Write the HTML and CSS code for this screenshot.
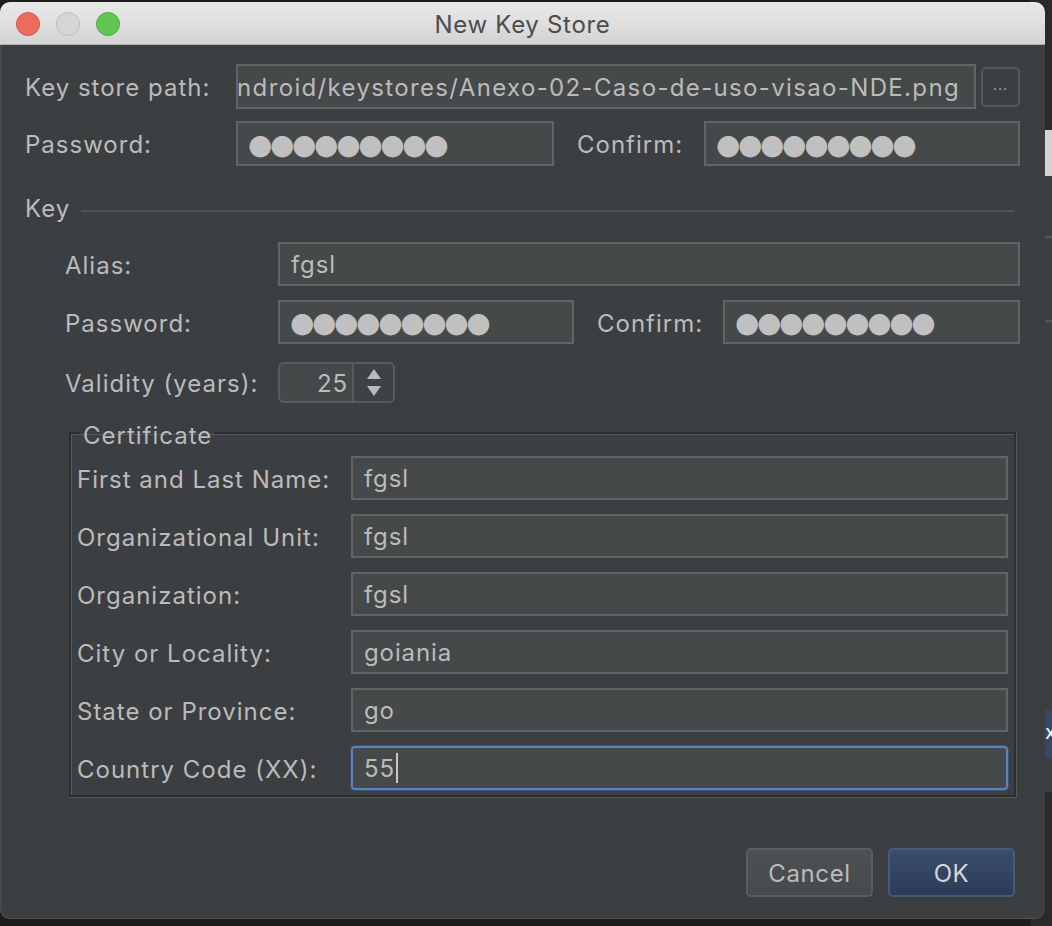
FILE: index.html
```html
<!DOCTYPE html>
<html>
<head>
<meta charset="utf-8">
<title>New Key Store</title>
<link rel="stylesheet" href="styles.css">
</head>
<body>
<div class="desktop">
  <div class="bgwin">
    <div class="bg-light"></div>
    <div class="bg-line l1"></div>
    <div class="bg-line l2"></div>
    <div class="bg-line l3"></div>
    <div class="bg-tab">x</div>
    <div class="bg-dark"></div>
  </div>
  <div class="dialog">
    <div class="titlebar">
      <div class="lights">
        <span class="light red"></span>
        <span class="light grey"></span>
        <span class="light green"></span>
      </div>
      <div class="title">New Key Store</div>
    </div>
    <div class="content">
      <div class="row r-path">
        <span class="lbl lbl-top">Key store path:</span>
        <div class="field path"><span class="path-text">/Users/fgsl/android/keystores/Anexo-02-Caso-de-uso-visao-NDE.png</span></div>
        <button class="browse">...</button>
      </div>
      <div class="row r-pass">
        <span class="lbl lbl-top">Password:</span>
        <div class="field w-pass1"><span class="dots">●●●●●●●●●</span></div>
        <span class="lbl lbl-confirm1">Confirm:</span>
        <div class="field grow"><span class="dots">●●●●●●●●●</span></div>
      </div>

      <div class="section-head">
        <span class="section-title">Key</span>
        <span class="section-line"></span>
      </div>

      <div class="key">
        <div class="row r-alias">
          <span class="lbl lbl-key">Alias:</span>
          <div class="field grow"><span class="val">fgsl</span></div>
        </div>
        <div class="row r-kpass">
          <span class="lbl lbl-key">Password:</span>
          <div class="field w-pass2"><span class="dots">●●●●●●●●●</span></div>
          <span class="lbl lbl-confirm2">Confirm:</span>
          <div class="field grow"><span class="dots">●●●●●●●●●</span></div>
        </div>
        <div class="row r-valid">
          <span class="lbl lbl-key">Validity (years):</span>
          <div class="spinner">
            <span class="spin-val">25</span>
            <span class="spin-arrows">
              <svg width="16" height="30" viewBox="0 0 16 30"><path d="M8 1 L15 11 L1 11 Z" fill="#bbbbbb"/><path d="M1 18 L15 18 L8 28 Z" fill="#bbbbbb"/></svg>
            </span>
          </div>
        </div>

        <fieldset class="cert">
          <legend>Certificate</legend>
          <div class="cert-row">
            <span class="lbl lbl-cert">First and Last Name:</span>
            <div class="field grow"><span class="val">fgsl</span></div>
          </div>
          <div class="cert-row">
            <span class="lbl lbl-cert">Organizational Unit:</span>
            <div class="field grow"><span class="val">fgsl</span></div>
          </div>
          <div class="cert-row">
            <span class="lbl lbl-cert">Organization:</span>
            <div class="field grow"><span class="val">fgsl</span></div>
          </div>
          <div class="cert-row">
            <span class="lbl lbl-cert">City or Locality:</span>
            <div class="field grow"><span class="val">goiania</span></div>
          </div>
          <div class="cert-row">
            <span class="lbl lbl-cert">State or Province:</span>
            <div class="field grow"><span class="val">go</span></div>
          </div>
          <div class="cert-row">
            <span class="lbl lbl-cert">Country Code (XX):</span>
            <div class="field grow focused"><span class="val">55</span><span class="caret"></span></div>
          </div>
        </fieldset>
      </div>

      <div class="buttons">
        <button class="btn cancel">Cancel</button>
        <button class="btn ok">OK</button>
      </div>
    </div>
  </div>
</div>
</body>
</html>
```

FILE: styles.css
```css
* { box-sizing: border-box; }
html, body { margin: 0; padding: 0; }
body {
  background: #1d1d1d;
  font-family: Inter, "Noto Sans", "Liberation Sans", sans-serif;
  width: 1052px;
  height: 926px;
  overflow: hidden;
}
.desktop {
  position: relative;
  width: 1052px;
  height: 926px;
  padding-top: 2px;
}
.bgwin {
  position: absolute;
  left: 1030px;
  top: 0;
  width: 22px;
  height: 926px;
  background: #2a2a2a;
  overflow: hidden;
}
.bg-light { position: absolute; left: 0; top: 130px; width: 40px; height: 46px; background: #d4d4d4; }
.bg-line { position: absolute; left: 0; width: 40px; height: 2px; background: #555; }
.bg-line.l1 { top: 176px; height: 60px; background: #3c3f41; }
.bg-line.l2 { top: 236px; height: 474px; background: #3c3f41; border-top: 2px solid #555; }
.bg-line.l3 { top: 320px; background: #555; }
.bg-tab { position: absolute; left: 0; top: 710px; width: 40px; height: 48px; background: #34486a; color: #fff; font-size: 20px; line-height: 44px; padding-left: 15px; }
.bg-dark { position: absolute; left: 0; top: 758px; width: 40px; height: 34px; background: #3c3f41; }

.dialog {
  position: relative;
  width: 1045px;
  height: 917px;
  background: #3c3f41;
  border-radius: 10px;
  overflow: hidden;
  display: flex;
  flex-direction: column;
  box-shadow: inset 0 -1px 0 #4e5052, inset 1px 0 0 #4a4c4e;
}
.titlebar {
  position: relative;
  height: 43px;
  flex: none;
  background: linear-gradient(#e9e9e9, #d3d3d3);
  border-bottom: 1px solid #b1b1b1;
  display: flex;
  align-items: center;
  justify-content: center;
  padding-top: 3px;
}
.lights {
  position: absolute;
  left: 16px;
  top: 10px;
  display: flex;
  gap: 16px;
}
.light {
  width: 24px;
  height: 24px;
  border-radius: 50%;
  display: block;
}
.light.red { background: #ed6a5e; border: 1px solid #d4574c; }
.light.grey { background: #d6d6d6; border: 1px solid #bdbdbd; }
.light.green { background: #62c554; border: 1px solid #50ac42; }
.title {
  font-size: 24px;
  color: #4c4c4c;
  letter-spacing: 0.7px;
}

.content {
  flex: 1;
  padding: 19px 25px 0 25px;
  display: flex;
  flex-direction: column;
}
.row {
  display: flex;
  align-items: center;
}
.lbl {
  color: #bbbbbb;
  font-size: 24px;
  letter-spacing: 1px;
  white-space: nowrap;
  flex: none;
  padding-top: 2px;
}
.lbl-top { width: 211px; }
.lbl-confirm1 { width: 127px; margin-left: 23px; }
.lbl-key { width: 213px; }
.lbl-confirm2 { width: 126px; margin-left: 23px; }
.lbl-cert { width: 274px; }

.field {
  height: 45px;
  background: #45494a;
  border: 2px solid #626465;
  display: flex;
  align-items: center;
  padding-left: 11px;
  overflow: hidden;
  color: #bbbbbb;
  font-size: 24px;
  letter-spacing: 0.9px;
}
.grow { flex: 1; }
.path { flex: 1; justify-content: flex-end; padding-right: 14px; }
.path-text { white-space: nowrap; flex: none; letter-spacing: 1.35px; padding-top: 2px; }
.w-pass1 { width: 318px; }
.w-pass2 { width: 296px; }
.r-pass { margin-top: 12px; }
.browse {
  margin-left: 5px;
  width: 39px;
  height: 40px;
  background: #3c3f41;
  border: 2px solid #555759;
  border-radius: 5px;
  color: #bbbbbb;
  font-family: inherit;
  font-size: 14px;
  padding: 0 0 4px 0;
  letter-spacing: 1px;
}
.dots {
  font-family: "DejaVu Sans", sans-serif;
  font-size: 28px;
  color: #c0c0c0;
  letter-spacing: -2.4px;
  line-height: 1;
  padding-top: 2px;
  margin-left: -1px;
}
.val { line-height: 1; padding-top: 2px; }

.section-head {
  display: flex;
  align-items: center;
  height: 28px;
  margin-top: 28px;
}
.section-title { color: #bbbbbb; font-size: 24px; letter-spacing: 1px; width: 56px; }
.section-line { flex: 1; height: 2px; background: #505254; margin-right: 6px; margin-top: 6px; }

.key { padding-left: 40px; }
.r-alias { margin-top: 20px; }
.r-alias .field, .r-kpass .field { height: 44px; }
.r-kpass { margin-top: 14px; }
.r-valid { margin-top: 18px; }
.spinner {
  width: 117px;
  height: 41px;
  border: 2px solid #595b5d;
  border-radius: 6px;
  background: #45494a;
  display: flex;
  overflow: hidden;
}
.spin-val {
  width: 74px;
  border-right: 2px solid #595b5d;
  color: #bbbbbb;
  font-size: 24px;
  letter-spacing: 0.9px;
  text-align: right;
  padding-right: 4px;
  line-height: 39px;
}
.spin-arrows {
  flex: 1;
  display: flex;
  align-items: center;
  justify-content: center;
  background: #3f4244;
}

.cert {
  margin: 13px 4px 0 4px;
  padding: 6px 6px 5px 6px;
  border: 2px solid #2c2e2f;
  box-shadow: inset 1px 1px 0 #57595b, 1px 1px 0 #57595b;
  min-inline-size: 0;
}
.cert legend {
  color: #bbbbbb;
  font-size: 24px;
  letter-spacing: 1px;
  padding: 6px 2px 0 2px;
  margin-left: 4px;
  line-height: 28px;
}
.cert-row {
  display: flex;
  align-items: center;
}
.cert-row + .cert-row { margin-top: 14px; }
.cert-row .field { height: 44px; }
.focused {
  border-color: #5b82b9;
  border-radius: 4px;
  box-shadow: 0 0 0 1px #3d5375;
}
.caret {
  width: 2px;
  height: 30px;
  background: #c8c8c8;
  margin-left: 1px;
}

.buttons {
  margin-top: 51px;
  display: flex;
  justify-content: flex-end;
  gap: 15px;
  padding-right: 5px;
}
.btn {
  width: 127px;
  height: 49px;
  border-radius: 5px;
  font-family: inherit;
  font-size: 24px;
  letter-spacing: 0.6px;
  padding: 2px 0 0 0;
}
.cancel {
  background: linear-gradient(#4d5052, #484b4d);
  border: 2px solid #5b5d5f;
  color: #bbbbbb;
}
.ok {
  background: linear-gradient(#394d6c, #2c3c57);
  border: 2px solid #475a78;
  color: #d6d6d6;
}
```
